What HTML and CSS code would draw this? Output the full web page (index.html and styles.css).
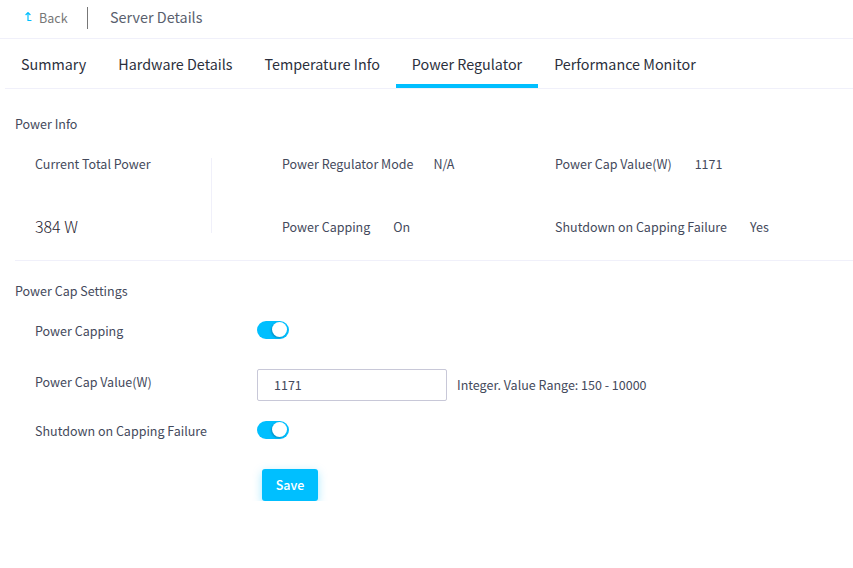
FILE: index.html
```html
<!DOCTYPE html>
<html lang="en">
<head>
    <meta charset="UTF-8">
    <meta name="viewport" content="width=device-width, initial-scale=1.0">
    <title>Server Details</title>
    <link rel="stylesheet" href="styles.css">
</head>
<body>
    <header class="top-bar">
        <a class="back-link">
            <svg class="back-icon" width="8" height="10" viewBox="0 0 8 10">
                <path d="M4 .8V8.5H7.5M1.6 3L4 .6L6.4 3" fill="none" stroke="#00bfff" stroke-width="1.2"/>
            </svg>
            Back
        </a>
        <span class="top-title">Server Details</span>
    </header>

    <nav class="tabs">
        <a class="tab">Summary</a>
        <a class="tab">Hardware Details</a>
        <a class="tab">Temperature Info</a>
        <a class="tab active">Power Regulator</a>
        <a class="tab">Performance Monitor</a>
    </nav>

    <section class="info-section">
        <h2 class="section-title">Power Info</h2>
        <div class="info-body">
            <div class="total-power">
                <span class="total-label">Current Total Power</span>
                <span class="total-value">384 W</span>
            </div>
            <div class="info-column col-mode">
                <div class="info-row"><span class="info-label gap-mode">Power Regulator Mode</span><span>N/A</span></div>
                <div class="info-row"><span class="info-label">Power Capping</span><span>On</span></div>
            </div>
            <div class="info-column">
                <div class="info-row"><span class="info-label">Power Cap Value(W)</span><span>1171</span></div>
                <div class="info-row"><span class="info-label">Shutdown on Capping Failure</span><span>Yes</span></div>
            </div>
        </div>
    </section>

    <section class="settings-section">
        <h2 class="section-title">Power Cap Settings</h2>
        <div class="form-row row-capping">
            <label class="form-label">Power Capping</label>
            <span class="switch"><span class="knob"></span></span>
        </div>
        <div class="form-row row-value">
            <label class="form-label">Power Cap Value(W)</label>
            <input class="text-input" type="text" value="1171">
            <span class="hint">Integer. Value Range: 150 - 10000</span>
        </div>
        <div class="form-row row-failure">
            <label class="form-label">Shutdown on Capping Failure</label>
            <span class="switch"><span class="knob"></span></span>
        </div>
        <button class="save-btn">Save</button>
    </section>
</body>
</html>
```

FILE: styles.css
```css
body {
    margin: 0;
    padding: 0;
    background-color: #fff;
    font-family: "Noto Sans CJK SC", "Noto Sans", sans-serif;
    font-size: 12.5px;
    color: #444a5c;
}

.top-bar {
    display: flex;
    align-items: center;
    height: 36px;
    padding-bottom: 2px;
    border-bottom: 1px solid #f0f0fa;
}

.back-link {
    display: flex;
    align-items: center;
    box-sizing: border-box;
    width: 64px;
    height: 22px;
    margin-left: 24px;
    padding-bottom: 2px;
    border-right: 1px solid #777;
    color: #777;
}

.back-icon {
    margin-right: 7px;
}

.top-title {
    margin-left: 22px;
    margin-bottom: 4px;
    font-size: 14.4px;
    color: #5a5f6e;
}

.tabs {
    display: flex;
    height: 49px;
    margin-left: 5px;
    border-bottom: 1px solid #f0f0fa;
}

.tab {
    box-sizing: border-box;
    height: 49px;
    padding: 0 16px;
    line-height: 50px;
    font-size: 14.34px;
    color: #2b2f3c;
}

.tab.active {
    border-bottom: 4px solid #00bfff;
}

.section-title {
    margin: 0;
    font-size: 12.5px;
    font-weight: 400;
    line-height: 20px;
}

.info-section {
    margin-left: 15px;
    height: 172px;
    border-bottom: 1px solid #f0f0fa;
    padding-top: 25px;
    box-sizing: border-box;
}

.info-body {
    display: flex;
    margin-top: 23px;
}

.total-power {
    display: flex;
    flex-direction: column;
    justify-content: space-between;
    box-sizing: border-box;
    width: 197px;
    height: 75px;
    padding-left: 20px;
    margin-top: 1px;
    border-right: 1px solid #f0f0fa;
}

.total-label {
    margin-top: -4px;
}

.total-value {
    font-size: 16px;
    font-weight: 300;
    line-height: 22px;
    margin-bottom: -4px;
    color: #1f2330;
}

.info-column {
    display: flex;
    flex-direction: column;
    gap: 43px;
    margin-left: 70px;
    margin-top: -3px;
}

.col-mode {
    width: 273px;
}

.info-column + .info-column {
    margin-left: 0;
}

.info-row {
    display: flex;
    line-height: 20px;
}

.info-label {
    margin-right: 23px;
}

.gap-mode {
    margin-right: 20px;
}

.settings-section {
    margin-left: 15px;
    padding-top: 20px;
}

.form-row {
    display: flex;
    align-items: flex-start;
    padding-left: 20px;
}

.form-label {
    width: 222px;
    line-height: 20px;
}

.row-capping {
    margin-top: 20px;
}

.row-value {
    margin-top: 33px;
}

.row-value .form-label {
    margin-top: -2px;
}

.row-failure {
    margin-top: 20px;
}

.switch {
    display: block;
    position: relative;
    width: 32px;
    height: 18px;
    border-radius: 9px;
    background-color: #00bfff;
}

.knob {
    position: absolute;
    top: 1px;
    right: 2px;
    width: 15px;
    height: 15px;
    border-radius: 50%;
    background-color: #fff;
    box-shadow: -1px 1px 2px rgba(0, 60, 90, 0.35);
}

.text-input {
    box-sizing: border-box;
    width: 190px;
    height: 32px;
    margin-top: -5px;
    padding: 0 16px 2px;
    border: 1px solid #c8c8d8;
    border-radius: 2px;
    font-family: inherit;
    font-size: 12.5px;
    color: #444a5c;
    outline: none;
}

.hint {
    margin-left: 10px;
    margin-top: 1px;
    line-height: 20px;
}

.save-btn {
    display: block;
    width: 56px;
    height: 32px;
    margin: 28px 0 0 247px;
    padding: 0 0 2px;
    border: none;
    border-radius: 3px;
    background-color: #00bfff;
    box-shadow: 0 3px 10px rgba(0, 191, 255, 0.35);
    font-family: inherit;
    font-size: 12.5px;
    font-weight: 500;
    color: #fff;
}
```
